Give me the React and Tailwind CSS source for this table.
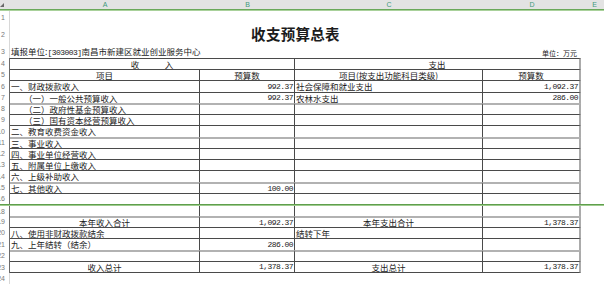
import React from "react";

const NUM = "font-['Liberation_Mono',monospace] text-[8px] tracking-[-0.55px]";
const DARK_T = "border-t border-t-[#4a4a4a]";
const GRAY_T = "border-t-2 border-t-[#b2b2b2]";

const rows = [
  { n: 5, h: "h-[11px]", top: "dark", a: "项目", ac: true, b: "预算数", bc: true, c: "项目(按支出功能科目类级)", cc: true, d: "预算数", dc: true },
  { n: 6, h: "h-[12px]", top: "dark", a: "一、财政拨款收入", b: "992.37", c: "社会保障和就业支出", d: "1,092.37" },
  { n: 7, h: "h-[11px]", top: "dark", a: "（一）一般公共预算收入", ai: true, b: "992.37", c: "农林水支出", d: "286.00" },
  { n: 8, h: "h-[11px]", top: "gray", a: "（二）政府性基金预算收入", ai: true },
  { n: 9, h: "h-[11px]", top: "dark", a: "（三）国有资本经营预算收入", ai: true },
  { n: 10, h: "h-[12px]", top: "dark", a: "二、教育收费资金收入" },
  { n: 11, h: "h-[11px]", top: "gray", a: "三、事业收入" },
  { n: 12, h: "h-[11px]", top: "dark", a: "四、事业单位经营收入" },
  { n: 13, h: "h-[11px]", top: "dark", a: "五、附属单位上缴收入" },
  { n: 14, h: "h-[12px]", top: "dark", a: "六、上级补助收入" },
  { n: 15, h: "h-[11px]", top: "gray", a: "七、其他收入", b: "100.00" },
  { n: 16, h: "h-[11px]", top: "dark" },
  { green: true },
  { n: 18, h: "h-[10px]", top: "none" },
  { n: 19, h: "h-[11px]", top: "gray", a: "本年收入合计", ac: true, b: "1,092.37", c: "本年支出合计", cc: true, d: "1,378.37" },
  { n: 20, h: "h-[11px]", top: "dark", a: "八、使用非财政拨款结余", c: "结转下年" },
  { n: 21, h: "h-[12px]", top: "dark", a: "九、上年结转（结余）", b: "286.00" },
  { n: 22, h: "h-[11px]", top: "gray" },
  { n: 23, h: "h-[12px]", top: "dark", bottom: true, a: "收入总计", ac: true, b: "1,378.37", c: "支出总计", cc: true, d: "1,378.37" },
];

function RH({ n, dark }) {
  return (
    <div
      className={`w-[10px] shrink-0 h-full flex items-center justify-end pr-[4px] overflow-hidden text-[7px] leading-none text-[#7a7a7a] font-['Liberation_Sans',sans-serif] border-r ${
        dark ? "border-r-[#6a6a6a]" : "border-r-[#d8d8d8]"
      }`}
    >
      <span>{n}</span>
    </div>
  );
}

function ColHeader() {
  const L = "text-[7px] leading-none text-[#3f9a7c] font-['Liberation_Sans',sans-serif]";
  return (
    <div className="h-[11px] shrink-0">
      <div className="h-[9px] bg-[#e3e3e3] flex">
        <div className="w-[10px] shrink-0 h-full relative">
          <svg className="absolute left-0 top-[3px]" width="4" height="4" viewBox="0 0 4 4">
            <polygon points="4,0 4,4 0,4" fill="#6a6a6a" />
          </svg>
        </div>
        <div className={`w-[190px] shrink-0 flex items-center justify-center ${L}`}>A</div>
        <div className={`w-[95px] shrink-0 flex items-center justify-center ${L}`}>B</div>
        <div className={`w-[188px] shrink-0 flex items-center justify-center ${L}`}>C</div>
        <div className={`w-[98px] shrink-0 flex items-center justify-center ${L}`}>D</div>
        <div className={`flex-1 flex items-center justify-center pl-[4px] ${L}`}>E</div>
      </div>
      <div className="h-[2px] bg-[#6aa85a] border-b border-b-[#a9d19b]" />
    </div>
  );
}

function Cell({ w, top, bottom, right, children, align }) {
  return (
    <div
      className={`${w} shrink-0 h-full flex items-center overflow-hidden whitespace-nowrap ${top} ${bottom ? "border-b border-b-[#4a4a4a]" : ""} ${right} ${align}`}
    >
      {children}
    </div>
  );
}

function TRow({ r }) {
  if (r.green) return <div className="h-[2px] shrink-0 bg-[#5f9f4c] border-b border-b-[#9fcb8f]" />;
  const top = r.top === "gray" ? GRAY_T : r.top === "dark" ? DARK_T : "";
  const RD = "border-r border-r-[#4a4a4a]";
  const RG = "border-r-2 border-r-[#ababab]";
  const alignA = r.ac ? "justify-center" : r.ai ? "justify-start pl-[14px]" : "justify-start pl-[1px]";
  const alignC = r.cc ? "justify-center" : "justify-start pl-[1px]";
  return (
    <div className={`${r.h} shrink-0 flex`}>
      <RH n={r.n} dark />
      <Cell w="w-[190px]" top={top} bottom={r.bottom} right={RD} align={alignA}>
        {r.a}
      </Cell>
      <Cell w="w-[95px]" top={top} bottom={r.bottom} right={RD} align={r.bc ? "justify-center" : "justify-end pr-[1px]"}>
        {r.b && (r.bc ? r.b : <span className={NUM}>{r.b}</span>)}
      </Cell>
      <Cell w="w-[188px]" top={top} bottom={r.bottom} right={RD} align={alignC}>
        {r.c}
      </Cell>
      <Cell w="w-[98px]" top={top} bottom={r.bottom} right={RG} align={r.dc ? "justify-center" : "justify-end pr-[1px]"}>
        {r.d && (r.dc ? r.d : <span className={NUM}>{r.d}</span>)}
      </Cell>
      <div className="flex-1" />
    </div>
  );
}

export default function App() {
  return (
    <div className="w-[604px] h-[284px] overflow-hidden bg-white text-[#1c1c1c] font-['Noto_Sans_CJK_SC',sans-serif] text-[8.5px] leading-none flex flex-col">
      <ColHeader />
      <div className="h-[13px] shrink-0 flex">
        <RH n={1} />
        <div className="flex-1" />
      </div>
      <div className="h-[21px] shrink-0 flex">
        <RH n={2} />
        <div className="w-[571px] shrink-0 flex items-center justify-center text-[14.5px] font-bold tracking-[0.3px]">
          收支预算总表
        </div>
        <div className="flex-1" />
      </div>
      <div className="h-[13px] shrink-0 flex">
        <RH n={3} />
        <div className="w-[569px] shrink-0 flex items-end justify-between pb-[1px] pl-[1px] pr-[2px]">
          <span>
            填报单位:<span className={NUM}>[303003]</span>南昌市新建区就业创业服务中心
          </span>
          <span className="text-[7px]">单位：万元</span>
        </div>
        <div className="flex-1" />
      </div>
      <div className="h-[11px] shrink-0 flex">
        <RH n={4} dark />
        <Cell w="w-[285px]" top={DARK_T} right="border-r border-r-[#4a4a4a]" align="justify-center">
          收　　　入
        </Cell>
        <Cell w="w-[286px]" top={DARK_T} right="border-r-2 border-r-[#ababab]" align="justify-center">
          支出
        </Cell>
        <div className="flex-1" />
      </div>
      {rows.map((r, i) => (
        <TRow key={i} r={r} />
      ))}
      <div className="flex-1 flex">
        <RH n={24} />
        <div className="flex-1" />
      </div>
    </div>
  );
}
